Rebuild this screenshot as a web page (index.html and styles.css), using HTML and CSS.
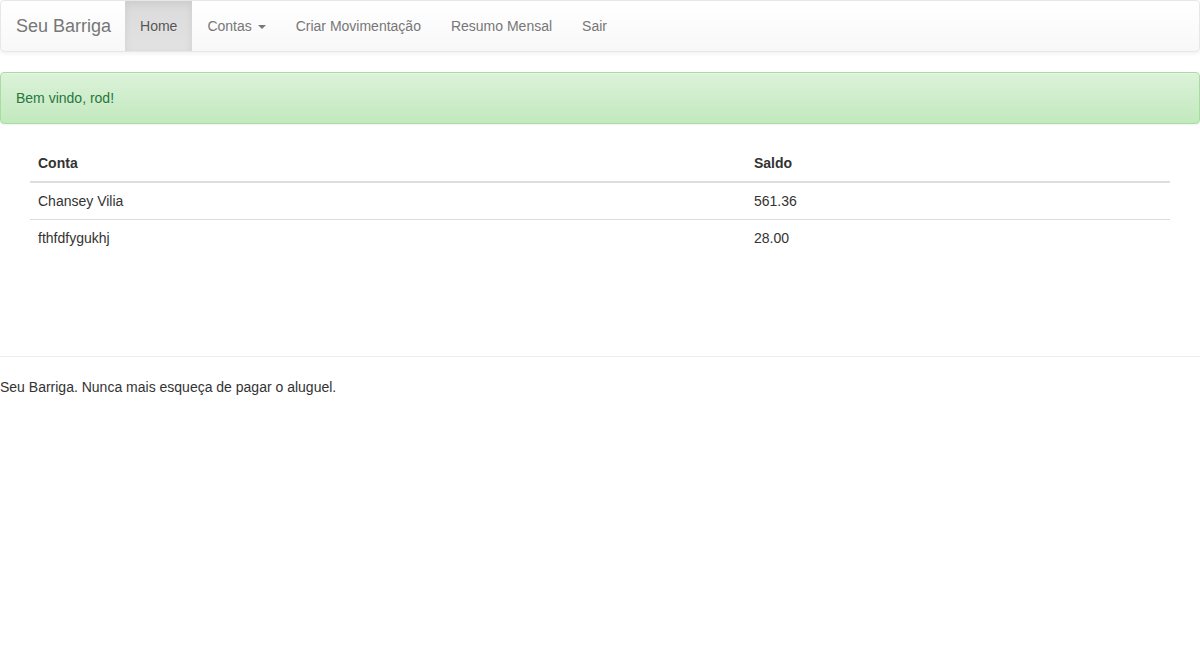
FILE: index.html
```html
<!DOCTYPE html>
<html lang="pt-BR">
<head>
<meta charset="utf-8">
<title>Seu Barriga</title>
<link rel="stylesheet" href="styles.css">
</head>
<body>
<nav class="navbar">
  <a class="brand" href="#">Seu Barriga</a>
  <ul class="nav">
    <li class="active"><a href="#">Home</a></li>
    <li><a href="#">Contas <span class="caret"></span></a></li>
    <li><a href="#">Criar Movimentação</a></li>
    <li><a href="#">Resumo Mensal</a></li>
    <li><a href="#">Sair</a></li>
  </ul>
</nav>
<div class="alert">Bem vindo, rod!</div>
<div class="container">
  <table class="table">
    <thead>
      <tr><th class="col-conta">Conta</th><th>Saldo</th></tr>
    </thead>
    <tbody>
      <tr><td>Chansey Vilia</td><td>561.36</td></tr>
      <tr><td>fthfdfygukhj</td><td>28.00</td></tr>
    </tbody>
  </table>
</div>
<footer class="footer">
  <hr class="rule">
  <p class="footer-text">Seu Barriga. Nunca mais esqueça de pagar o aluguel.</p>
</footer>
</body>
</html>
```
FILE: styles.css
```css
* { box-sizing: border-box; }
html, body { margin: 0; padding: 0; }
body {
  font-family: "Liberation Sans", Arial, sans-serif;
  font-size: 14px;
  line-height: 20px;
  color: #333;
  background: #fff;
}
a { text-decoration: none; }

.navbar {
  display: flex;
  align-items: stretch;
  height: 52px;
  border: 1px solid #e7e7e7;
  border-radius: 4px;
  background-image: linear-gradient(to bottom, #fff 0, #f8f8f8 100%);
  box-shadow: inset 0 1px 0 rgba(255,255,255,.15), 0 1px 5px rgba(0,0,0,.075);
  margin-bottom: 20px;
}
.brand {
  display: block;
  padding: 15px 14px 15px 15px;
  font-size: 18px;
  line-height: 20px;
  height: 50px;
  color: #777;
  text-shadow: 0 1px 0 rgba(255,255,255,.25);
}
.nav {
  display: flex;
  list-style: none;
  margin: 0;
  padding: 0;
}
.nav li a {
  display: block;
  padding: 15px;
  line-height: 20px;
  height: 50px;
  color: #777;
  text-shadow: 0 1px 0 rgba(255,255,255,.25);
}
.nav li.active a {
  color: #555;
  background-image: linear-gradient(to bottom, #dbdbdb 0, #e2e2e2 100%);
  box-shadow: inset 0 3px 9px rgba(0,0,0,.075);
}
.caret {
  display: inline-block;
  width: 0;
  height: 0;
  margin-left: 2px;
  vertical-align: middle;
  border-top: 4px solid;
  border-right: 4px solid transparent;
  border-left: 4px solid transparent;
}

.alert {
  padding: 15px;
  margin-bottom: 20px;
  border: 1px solid #a6dea0;
  border-radius: 4px;
  color: #24773b;
  background-image: linear-gradient(to bottom, #dcf2d9 0, #c2e9be 100%);
  text-shadow: 0 1px 0 rgba(255,255,255,.2);
  box-shadow: inset 0 1px 0 rgba(255,255,255,.25), 0 1px 2px rgba(0,0,0,.05);
}

.container {
  width: 1170px;
  padding: 1px 15px 0;
  margin: 0 auto;
}
.table {
  width: 100%;
  border-collapse: collapse;
  border-spacing: 0;
  margin-bottom: 100px;
}
.table th, .table td {
  padding: 8px;
  text-align: left;
  line-height: 20px;
  vertical-align: top;
}
.table th {
  font-weight: bold;
  border-bottom: 2px solid #ddd;
  vertical-align: bottom;
}
.table td { border-top: 1px solid #ddd; }
.col-conta { width: 716px; }

.rule {
  margin: 0 0 20px;
  border: 0;
  border-top: 1px solid #eee;
  height: 0;
}
.footer-text { margin: 0 0 10px; }
```
